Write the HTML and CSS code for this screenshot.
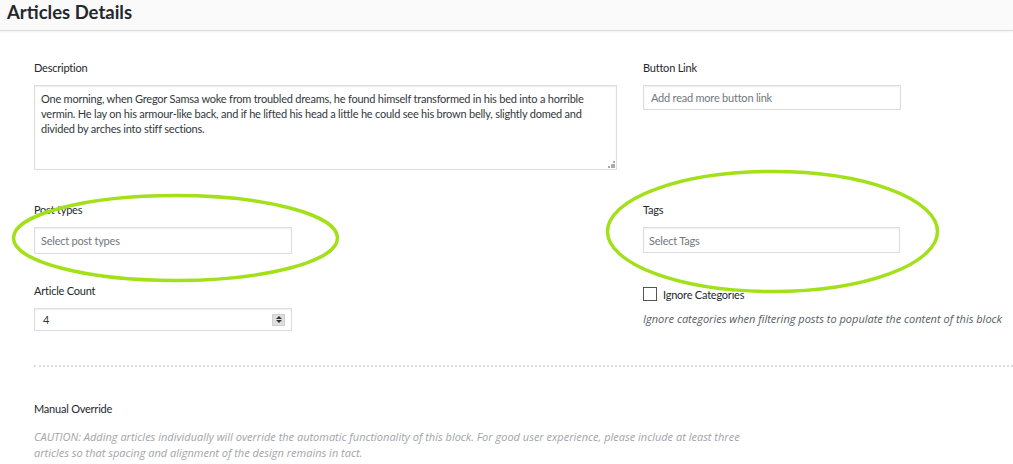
FILE: index.html
```html
<!DOCTYPE html>
<html lang="en">
<head>
<meta charset="utf-8">
<title>Articles Details</title>
<link rel="stylesheet" href="styles.css">
</head>
<body>
<header class="panel-header">
  <h1 class="panel-title">Articles Details</h1>
</header>
<main class="panel-body">
  <div class="fields">
    <div class="field field-desc">
      <label class="field-label">Description</label>
      <div class="textarea-wrap">
        <div class="textarea">One morning, when Gregor Samsa woke from troubled dreams, he found himself transformed in his bed into a horrible vermin. He lay on his armour-like back, and if he lifted his head a little he could see his brown belly, slightly domed and divided by arches into stiff sections.</div>
        <svg class="resize-grip" width="7" height="7" viewBox="0 0 7 7"><g fill="#aaa"><rect x="5" y="0" width="2" height="2"/><rect x="3" y="3" width="2" height="2"/><rect x="5" y="3" width="2" height="2"/><rect x="0" y="5" width="2" height="2"/><rect x="3" y="5" width="2" height="2"/><rect x="5" y="5" width="2" height="2"/></g></svg>
      </div>
    </div>
    <div class="field field-link">
      <label class="field-label">Button Link</label>
      <div class="input input-link placeholder">Add read more button link</div>
    </div>

    <div class="field field-row2">
      <label class="field-label">Post types</label>
      <div class="input input-select placeholder">Select post types</div>
    </div>
    <div class="field field-row2">
      <label class="field-label">Tags</label>
      <div class="input input-select input-tags placeholder">Select Tags</div>
    </div>

    <div class="field field-row3">
      <label class="field-label">Article Count</label>
      <div class="input input-number">
        <span class="number-value">4</span>
        <span class="spinner"><span class="tri-up"></span><span class="tri-down"></span></span>
      </div>
    </div>
    <div class="field field-row3">
      <div class="check-row">
        <span class="checkbox"></span>
        <span class="check-label">Ignore Categories</span>
      </div>
      <p class="help">Ignore categories when filtering posts to populate the content of this block</p>
    </div>
  </div>

  <hr class="divider">

  <section class="override">
    <label class="field-label">Manual Override</label>
    <p class="caution">CAUTION: Adding articles individually will override the automatic functionality of this block. For good user experience, please include at least three articles so that spacing and alignment of the design remains in tact.</p>
  </section>
</main>

<svg class="highlights" width="1013" height="464" viewBox="0 0 1013 464">
  <ellipse cx="175.5" cy="238" rx="162" ry="42.5" fill="none" stroke="#a2e01a" stroke-width="3.5"/>
  <ellipse cx="772.5" cy="231.5" rx="165" ry="60" fill="none" stroke="#a2e01a" stroke-width="3.5"/>
</svg>
</body>
</html>
```

FILE: styles.css
```css
* { box-sizing: border-box; }

html, body {
  margin: 0;
  padding: 0;
  background: #fff;
  width: 1013px;
  height: 464px;
  overflow: hidden;
}

body {
  position: relative;
  font-family: Lato, "Open Sans", sans-serif;
  font-size: 11px;
  letter-spacing: -0.22px;
  color: #23282d;
}

.panel-header {
  height: 31px;
  background: #fafafa;
  border-bottom: 1px solid #dcdcdc;
  box-shadow: 0 1px 2px rgba(0,0,0,0.06);
  padding-left: 7px;
}

.panel-title {
  margin: 0;
  font-size: 18.5px;
  line-height: 24px;
  font-weight: 700;
  letter-spacing: 0;
  color: #23282d;
}

.panel-body {
  padding: 29px 0 0 34px;
}

.fields {
  display: grid;
  grid-template-columns: 583px 1fr;
  column-gap: 26px;
  align-items: start;
}

.field-label {
  display: block;
  line-height: 16px;
  margin-bottom: 9px;
  color: #23282d;
}

.textarea-wrap {
  position: relative;
}

.textarea {
  height: 85px;
  border: 1px solid #ddd;
  box-shadow: inset 0 1px 2px rgba(0,0,0,0.07);
  padding: 5px 6px;
  line-height: 15px;
  color: #32373c;
}

.resize-grip {
  position: absolute;
  right: 2px;
  bottom: 2px;
}

.input {
  border: 1px solid #ddd;
  box-shadow: inset 0 1px 2px rgba(0,0,0,0.07);
  padding: 0 7px;
  display: flex;
  align-items: center;
  color: #32373c;
}

.placeholder { color: #72777c; }

.input-link { width: 258px; height: 25px; }

.field-row2 { margin-top: 32px; }

.input-select { width: 258px; height: 27px; padding-left: 6px; }
.input-tags { width: 257px; height: 26px; padding-left: 5px; }

.field-row3 { margin-top: 29px; }

.input-number {
  width: 258px;
  height: 23px;
  justify-content: space-between;
  padding: 0 6px 0 8px;
}

.number-value { color: #32373c; }

.spinner {
  width: 13px;
  height: 12px;
  background: #dedede;
  border: 1px solid #cfcfcf;
  display: flex;
  flex-direction: column;
  align-items: center;
  justify-content: center;
  gap: 1px;
}

.tri-up, .tri-down {
  width: 0;
  height: 0;
  border-left: 3px solid transparent;
  border-right: 3px solid transparent;
}
.tri-up { border-bottom: 3px solid #333; }
.tri-down { border-top: 3px solid #333; }

.check-row {
  display: flex;
  align-items: center;
  gap: 6px;
  margin-top: 3px;
  height: 16px;
}

.checkbox {
  width: 14px;
  height: 14px;
  border: 1px solid #555;
  background: #fff;
}

.check-label { color: #23282d; }

.help {
  margin: 9px 0 0;
  line-height: 16px;
  font-family: "Open Sans", sans-serif;
  font-style: italic;
  letter-spacing: 0;
  color: #555d66;
}

.divider {
  margin: 34px 0 0;
  border: 0;
  border-top: 2px dotted #dcdcdc;
  height: 0;
}

.override {
  padding-top: 34px;
}

.override .field-label { margin-bottom: 12px; }

.caution {
  margin: 0;
  width: 720px;
  line-height: 16px;
  font-family: "Open Sans", sans-serif;
  font-style: italic;
  letter-spacing: 0;
  color: #a0a5aa;
}

.highlights {
  position: absolute;
  left: 0;
  top: 0;
  pointer-events: none;
}
```
